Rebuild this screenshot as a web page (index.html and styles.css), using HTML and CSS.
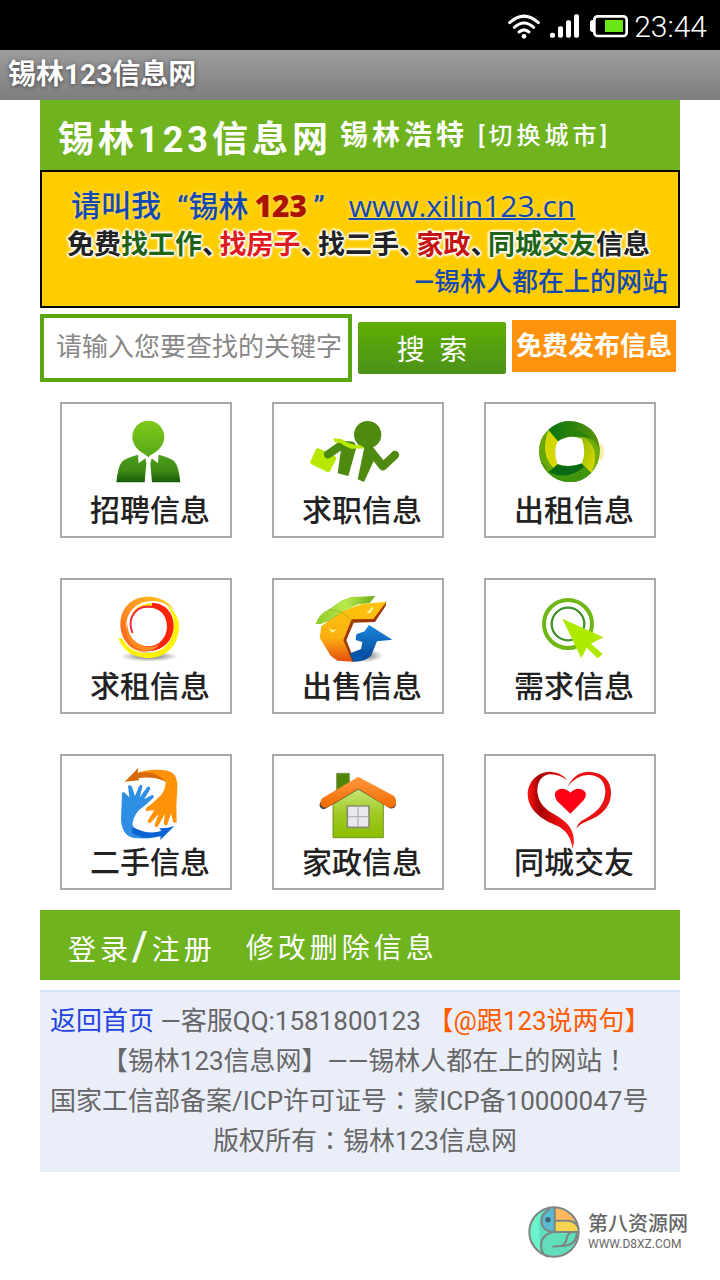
FILE: index.html
```html
<!DOCTYPE html>
<html lang="zh-CN">
<head>
    <meta charset="UTF-8">
    <meta name="viewport" content="width=device-width, initial-scale=1.0">
    <title>锡林123信息网</title>
    <link rel="stylesheet" href="styles.css">
</head>
<body>

    <!-- 状态栏 -->
    <div class="status-bar">
        <svg class="icon-wifi" width="32" height="25" viewBox="0 0 96 75" fill="none" stroke="#fff" stroke-width="9" stroke-linecap="round">
            <path d="M5 26Q48-13 91 26"/>
            <path d="M19 40Q48 14 77 40"/>
            <path d="M33 54Q48 41 63 54"/>
            <circle cx="48" cy="67" r="7" fill="#fff" stroke="none"/>
        </svg>
        <svg class="icon-signal" width="30" height="24" viewBox="0 0 90 72" fill="#fff">
            <rect x="0" y="56" width="15" height="15" rx="6"/>
            <rect x="24" y="37" width="15" height="34" rx="6"/>
            <rect x="48" y="19" width="15" height="52" rx="6"/>
            <rect x="72" y="1" width="15" height="70" rx="6"/>
        </svg>
        <svg class="icon-battery" width="38" height="24" viewBox="0 0 114 72">
            <rect x="0" y="18" width="16" height="36" rx="8" fill="#fff"/>
            <rect x="13" y="7" width="97" height="59" rx="10" fill="#000" stroke="#fff" stroke-width="8"/>
            <rect x="45" y="18" width="54" height="36" fill="#68e616"/>
        </svg>
        <span class="clock">23:44</span>
    </div>

    <div class="title-bar">锡林123信息网</div>

    <div class="page">
        <!-- 头部 -->
        <header class="header">
            <h1>锡林123信息网</h1>
            <span class="city">锡林浩特</span>
            <a class="switch-city" href="#">[切换城市]</a>
        </header>

        <!-- 横幅 -->
        <div class="banner">
            <p class="banner-call">
                <span>请叫我</span>
                <span class="banner-name"><i>“</i>锡林<b>123</b><i>”</i></span>
                <a href="#">www.xilin123.cn</a>
            </p>
            <p class="banner-list">免费<span class="green">找工作</span><i>、</i><span class="red">找房子</span><i>、</i>找二手<i>、</i><span class="darkred">家政</span><i>、</i><span class="green">同城交友</span>信息</p>
            <p class="banner-slogan">—锡林人都在上的网站</p>
        </div>

        <!-- 搜索 -->
        <form class="search">
            <input type="text" class="search-input" name="keyword" placeholder="请输入您要查找的关键字" aria-label="关键字">
            <button type="submit" class="search-button">搜&ensp;索</button>
            <a class="publish" href="#">免费发布信息</a>
        </form>

        <!-- 分类 -->
        <nav class="grid">
            <a class="tile" href="#">
                <svg viewBox="36 27 504 267">
                    <defs>
                        <linearGradient id="head" x1="0" y1="0" x2="0" y2="1"><stop offset="0" stop-color="#80c91a"/><stop offset="1" stop-color="#55a818"/></linearGradient>
                        <linearGradient id="suit" x1="0" y1="0" x2="0" y2="1"><stop offset="0" stop-color="#4da01c"/><stop offset=".6" stop-color="#3d8b14"/><stop offset="1" stop-color="#145a08"/></linearGradient>
                    </defs>
                    <path fill="url(#head)" d="M295 77C322 77 343 99 343 126C343 150 325 168 309 176Q301 180 295 187Q289 180 281 176C265 168 247 150 247 126C247 99 268 77 295 77Z"/>
                    <path fill="url(#suit)" d="M264 179L266 205L286 190L289 206L284 262H199Q203 215 216 200Q225 190 264 179ZM326 179L324 205L305 190L301 206L306 262H391Q387 215 374 200Q365 190 326 179Z"/>
                </svg>
                <span>招聘信息</span>
            </a>
            <a class="tile" href="#">
                <svg viewBox="672 27 504 267">
                    <path fill="#b9e800" stroke="#b9e800" stroke-width="16" stroke-linejoin="round" d="M804 168L851 190L834 223L789 201Z"/>
                    <g fill="#4f8a10">
                        <circle cx="953" cy="119" r="41"/>
                        <path d="M876 142L921 151L895 243L863 235Z"/>
                        <path d="M944 152L969 160L973 194L942 261L923 253Z"/>
                    </g>
                    <path fill="none" stroke="#4f8a10" stroke-width="25" stroke-linejoin="round" stroke-linecap="round" d="M905 152L875 150L834 178M960 165L999 214L1035 180"/>
                    <path fill="#b9e800" d="M850 130L874 132Q900 151 937 152L940 161Q913 159 905 162Q884 155 872 145L853 141Z"/>
                </svg>
                <span>求职信息</span>
            </a>
            <a class="tile" href="#">
                <svg viewBox="138 27 504 267">
                    <defs>
                        <linearGradient id="ringDark"><stop offset="0" stop-color="#08730d"/><stop offset="1" stop-color="#58940a"/></linearGradient>
                        <linearGradient id="ringLime" x1="0" y1="0" x2="1" y2="1"><stop offset="0" stop-color="#8fb808"/><stop offset="1" stop-color="#e0dd00"/></linearGradient>
                    </defs>
                    <ellipse cx="482" cy="171" rx="10" ry="25" fill="#faedab"/>
                    <circle cx="388" cy="170" r="91" fill="#4f9b08"/>
                    <path fill="url(#ringDark)" d="M325 105Q371 62 430 88Q480 112 479 172Q467 130 419 124Q380 118 355 140Z"/>
                    <path fill="#277f0c" d="M355 140Q372 94 423 112Q448 122 463 145Q446 129 421 125Q381 119 355 140Z"/>
                    <path fill="#d5d800" d="M325 105L355 140Q336 173 356 203L341 220Q298 180 325 105Z"/>
                    <path fill="#67a90a" d="M325 105Q295 177 341 220L330 232Q280 178 308 124Z"/>
                    <path fill="#6fae08" d="M479 172Q476 211 453 234Q471 188 451 146Q437 127 420 125Q470 126 479 172Z"/>
                    <path fill="url(#ringLime)" d="M420 125Q452 133 463 166Q471 202 453 234L422 204Q442 166 420 125Z"/>
                    <path fill="#086b13" d="M326 231L353 208Q381 221 423 204L453 234Q425 264 384 261Q351 258 326 231Z"/>
                    <path fill="#3f950b" d="M326 231Q381 258 433 215L453 234Q425 264 384 261Q351 258 326 231Z"/>
                    <path fill="#fff" d="M352 140Q389 116 425 131Q440 167 426 205Q389 220 352 207Q339 171 352 140Z"/>
                </svg>
                <span>出租信息</span>
            </a>

            <a class="tile" href="#">
                <svg viewBox="36 30 504 267">
                    <defs>
                        <radialGradient id="shade"><stop offset="0" stop-color="#333" stop-opacity=".75"/><stop offset="1" stop-color="#333" stop-opacity="0"/></radialGradient>
                        <linearGradient id="sun" x1="0" y1="1" x2="1" y2="0"><stop offset="0" stop-color="#ff5a16"/><stop offset=".5" stop-color="#ff9222"/><stop offset="1" stop-color="#ffcf16"/></linearGradient>
                    </defs>
                    <ellipse cx="298" cy="259" rx="86" ry="16" fill="url(#shade)"/>
                    <path fill="#fff100" d="M206 208Q208 202 216 205Q239 250 291 249C346 249 376 207 371 153Q367 125 348 104Q388 129 387 174C384 230 343 267 289 264Q228 260 206 208Z"/>
                    <path fill="url(#sun)" d="M299 244C244 253 210 207 211 160C213 109 249 79 297 80Q347 82 374 121Q339 90 302 93C258 96 231 126 229 164C229 205 261 237 299 244Z"/>
                    <path fill="#ffe100" d="M246 130Q265 101 306 99L306 107Q268 105 246 137Z"/>
                    <path fill="#ff230a" d="M306 98C348 100 372 130 371 170C368 218 334 243 294 243C256 243 230 213 230 177Q248 226 290 229C326 230 350 204 351 170Q349 122 306 113Z"/>
                    <path fill="#ff8a20" d="M231 154Q233 218 289 230Q315 233 331 219Q315 245 286 243Q241 236 230 193Z"/>
                    <path fill="none" stroke="#f52b39" stroke-width="6" stroke-linecap="round" d="M306 111Q263 104 246 140Q237 163 247 187"/>
                </svg>
                <span>求租信息</span>
            </a>
            <a class="tile" href="#">
                <svg viewBox="672 30 504 267">
                    <defs>
                        <linearGradient id="gold" x1="0" y1="0" x2="0" y2="1"><stop offset="0" stop-color="#ffc40e"/><stop offset=".6" stop-color="#fbb010"/><stop offset="1" stop-color="#e34d0c"/></linearGradient>
                        <linearGradient id="leaf"><stop offset="0" stop-color="#8cc92a"/><stop offset=".5" stop-color="#b9ea4c"/><stop offset="1" stop-color="#69aa16"/></linearGradient>
                        <linearGradient id="blue" x1="0" y1="0" x2="0" y2="1"><stop offset="0" stop-color="#1987df"/><stop offset="1" stop-color="#034593"/></linearGradient>
                    </defs>
                    <ellipse cx="942" cy="257" rx="58" ry="20" fill="url(#shade)"/>
                    <path fill="url(#gold)" d="M832 155L878 122L937 102L1009 95L973 151L908 154L883 211L911 275L862 272L842 257L809 203L814 169Z"/>
                    <path fill="#9e3807" d="M1009 95L1007 108L975 156L911 158L889 211L914 273L907 275L880 211L905 148L970 147Z"/>
                    <path fill="url(#leaf)" d="M797 162Q806 132 837 118L877 90L903 81L976 78L959 99L925 103L875 126L834 153L813 162Z"/>
                    <path fill="none" stroke="#8fae1b" stroke-width="2" d="M837 118L875 126L908 155M875 126L832 155"/>
                    <path fill="#fff1a0" d="M834 174L847 180L862 177L847 188ZM950 128L966 111L970 115L961 130Z"/>
                    <path fill="url(#blue)" d="M957 165L1027 209L981 214L964 256Q948 275 911 275L900 251L933 238L937 216L917 210L919 193L944 184Z"/>
                    <path fill="#0456ab" d="M900 251L933 238L945 247L935 269L911 275Z"/>
                </svg>
                <span>出售信息</span>
            </a>
            <a class="tile" href="#">
                <svg viewBox="138 555 504 267">
                    <circle cx="384" cy="687" r="72" fill="none" stroke="#6eb713" stroke-width="12"/>
                    <circle cx="384" cy="687" r="49" fill="none" stroke="#3f912c" stroke-width="7"/>
                    <path fill="#aee900" d="M367 671L490 727L453 746L488 777L473 790L440 758L424 790Z"/>
                </svg>
                <span>需求信息</span>
            </a>

            <a class="tile" href="#">
                <svg viewBox="36 33 504 267">
                    <path fill="#ff9207" d="M252 87Q301 69 352 77Q383 83 382 126L379 181L380 231Q375 238 369 230L363 205L352 239Q344 245 341 235L345 206L324 244Q314 251 314 239L326 207L301 234Q291 235 294 226L313 196L287 198Q285 188 304 178L323 160Q346 143 347 112Q333 91 292 92Z"/>
                    <path fill="#d66a09" d="M224 110L265 69L263 85Q311 72 349 111Q309 92 264 100L269 106Z"/>
                    <path fill="#2d8ee2" d="M216 149Q214 141 223 142L238 157L234 123Q239 118 245 124L255 153L268 122Q276 116 277 125L269 157L292 126Q301 121 301 132L282 163L306 150Q315 150 309 160L282 184Q252 202 247 238Q254 265 301 265L344 263Q316 285 253 279Q214 273 213 219Z"/>
                    <path fill="#0864d0" d="M247 245Q291 271 334 258L328 250Q353 251 373 243L331 285L332 274Q278 286 247 264Z"/>
                </svg>
                <span>二手信息</span>
            </a>
            <a class="tile" href="#">
                <svg viewBox="672 33 504 267">
                    <defs>
                        <linearGradient id="wall" x1="0" y1="0" x2="0" y2="1"><stop offset="0" stop-color="#c7e77c"/><stop offset=".5" stop-color="#a0c923"/><stop offset="1" stop-color="#8ac000"/></linearGradient>
                        <linearGradient id="roof" x1="0" y1="0" x2="0" y2="1"><stop offset="0" stop-color="#ff9a42"/><stop offset="1" stop-color="#f36a00"/></linearGradient>
                    </defs>
                    <path fill="#508508" stroke="#79984e" stroke-width="3" d="M860 85H898V140L860 165Z"/>
                    <path fill="url(#wall)" stroke="#76952d" stroke-width="3" d="M849 178L925 130L1000 177V278H849Z"/>
                    <path fill="none" stroke="#4e4744" stroke-width="25" stroke-linecap="round" stroke-linejoin="round" d="M821 180L925 119L1025 178"/>
                    <path fill="url(#roof)" d="M925 95L1032 153Q1042 164 1036 181Q1030 191 1015 187L925 131L832 187Q816 190 812 176Q809 161 824 155Z"/>
                    <path fill="#e8e8ef" stroke="#8b8b73" stroke-width="5" d="M892 183H957V247H892Z"/>
                    <path stroke="#b5b5ba" stroke-width="4" d="M924 184V246M893 215H956"/>
                </svg>
                <span>家政信息</span>
            </a>
            <a class="tile" href="#">
                <svg viewBox="48 33 504 267">
                    <defs>
                        <linearGradient id="ribbon"><stop offset="0" stop-color="#ff1313"/><stop offset=".25" stop-color="#a40000"/><stop offset=".6" stop-color="#e00a0a"/><stop offset="1" stop-color="#ff1c1c"/></linearGradient>
                    </defs>
                    <path fill="url(#ribbon)" d="M293 106Q273 81 240 80C200 81 174 112 173 148C174 195 214 223 254 239Q300 256 308 311Q320 272 295 240Q280 223 246 204C215 185 202 162 202 134Q204 95 237 88Q265 86 293 106Z"/>
                    <path fill="#e81212" d="M293 125Q314 80 358 80C402 82 424 109 423 145C422 191 389 214 351 229Q329 237 319 251Q322 232 346 221C387 199 405 174 406 139C405 107 386 91 357 90Q322 88 293 125Z"/>
                    <path fill="#ff0017" d="M301 206L261 168Q246 144 264 134Q284 125 301 143Q319 125 338 134Q356 145 341 166Z"/>
                </svg>
                <span>同城交友</span>
            </a>
        </nav>

        <!-- 会员 -->
        <nav class="member">
            <span><a href="#">登录</a><b>/</b><a href="#">注册</a></span>
            <a href="#">修改删除信息</a>
        </nav>

        <!-- 页脚 -->
        <footer class="footer">
            <p><a class="home" href="#">返回首页</a> —客服QQ:1581800123 <a class="talk" href="#">【@跟123说两句】</a></p>
            <p class="center">【锡林123信息网】——锡林人都在上的网站<span class="mark" lang="zh-TW">！</span></p>
            <p>国家工信部备案/ICP许可证号<span class="mark" lang="zh-TW">：</span>蒙ICP备10000047号</p>
            <p class="center">版权所有<span class="mark" lang="zh-TW">：</span>锡林123信息网</p>
        </footer>
    </div>

    <div class="watermark">
        <svg width="52" height="52" viewBox="0 0 156 156">
            <defs><clipPath id="badge"><circle cx="78" cy="78" r="72"/></clipPath></defs>
            <g clip-path="url(#badge)">
                <rect width="156" height="156" fill="#61dfbd"/>
                <path fill="#6af3cd" d="M0 0H49Q22 48 43 156H0Z"/>
                <path fill="#5bbbd5" d="M80 0V78Q35 75 39 41Q43 13 80 0Z"/>
                <path fill="#ffb75d" d="M80 0H125L152 45H80Z"/>
                <path fill="#f5d250" d="M80 44H125Q151 52 151 78H80Z"/>
            </g>
            <g fill="none" stroke="#7d8583" stroke-width="6" stroke-linecap="round">
                <circle cx="78" cy="78" r="74"/>
                <path d="M80 6V78H150M80 44H124Q145 48 151 66M63 10Q31 32 43 58Q51 77 80 78Q39 84 39 120Q40 145 58 151M146 80Q147 118 100 120Q77 122 76 122M100 120Q115 112 117 94Q119 83 130 79"/>
            </g>
            <circle cx="60" cy="41" r="8" fill="#41636e"/>
        </svg>
        <div class="watermark-text">
            <strong>第八资源网</strong>
            <span>WWW.D8XZ.COM</span>
        </div>
    </div>

</body>
</html>
```
FILE: styles.css
```css
body {
    margin: 0;
    background-color: #fff;
    font-family: Roboto, "Noto Sans CJK SC", sans-serif;
    font-size: 26px;
    color: #666;
}
h1, p {
    margin: 0;
}
a {
    color: inherit;
    text-decoration: none;
}
i {
    font-style: normal;
}
svg {
    display: block;
}

/* 状态栏和标题栏 */
.status-bar {
    display: flex;
    align-items: center;
    justify-content: flex-end;
    gap: 10px;
    height: 50px;
    padding: 2px 13px 0;
    box-sizing: border-box;
    background-color: #000;
}
.clock {
    margin-left: -4px;
    font-size: 30px;
    font-weight: 300;
    color: #fff;
}
.title-bar {
    padding: 0 8px;
    height: 50px;
    line-height: 50px;
    font-size: 28px;
    font-weight: bold;
    color: #fff;
    background: linear-gradient(#9c9c9c, #7e7e7e);
    text-shadow: 0 1px 4px #444;
}

.page {
    padding: 0 40px;
}

/* 头部 */
.header {
    display: flex;
    align-items: center;
    height: 70px;
    padding: 0 0 4px 18px;
    box-sizing: border-box;
    background-color: #6fb31f;
    color: #fff;
    letter-spacing: 4px;
    white-space: nowrap;
}
.header h1 {
    padding-top: 6px;
    font-size: 36px;
    font-weight: bold;
}
.city {
    margin: 0 10px 0 8px;
    font-size: 28px;
    font-weight: bold;
}
.switch-city {
    font-size: 24px;
    font-weight: 500;
}

/* 横幅 */
.banner {
    padding: 15px 10px 6px 25px;
    border: 2px solid #000;
    background-color: #fc0;
    color: #1248b5;
    font-weight: 500;
    line-height: 38px;
    white-space: nowrap;
}
.banner-call {
    display: flex;
    gap: 16px;
    padding-left: 4px;
    font-size: 30px;
    text-shadow: 0 0 4px #ffe680;
}
.banner-call b {
    padding: 0 6px;
    font-family: "Open Sans", sans-serif;
    font-weight: 800;
    color: #ac1200;
}
.banner-call a {
    margin-left: 8px;
    font-family: "Open Sans", sans-serif;
    font-weight: 500;
    text-decoration: underline;
    text-decoration-thickness: 2px;
}
.banner-list {
    font-size: 27px;
    font-weight: bold;
    color: #222;
    text-shadow: 2px 0 2px #fff, -2px 0 2px #fff, 0 2px 2px #fff, 0 -2px 2px #fff, 0 0 3px #fff;
}
.banner-list i {
    margin-right: 4px;
    font-feature-settings: "halt";
}
.green {
    color: #1f6414;
}
.red {
    color: #e11a22;
}
.darkred {
    color: #c51212;
}
.banner-slogan {
    text-align: right;
    line-height: 36px;
}

/* 搜索 */
.search {
    display: flex;
    align-items: center;
    gap: 6px;
    margin-top: 6px;
    padding-right: 4px;
}
.search-input {
    flex: 1;
    min-width: 0;
    height: 68px;
    box-sizing: border-box;
    padding: 0 0 2px 12px;
    border: 4px solid #59a60f;
    border-radius: 0;
    font: inherit;
    color: #333;
    outline: none;
}
.search-input::placeholder {
    color: #888;
}
.search-button {
    width: 148px;
    height: 52px;
    padding: 0;
    border: none;
    border-radius: 2px;
    background: linear-gradient(#5fae03, #4c9219);
    color: #fff;
    font: inherit;
    font-size: 28px;
    cursor: pointer;
}
.publish {
    width: 164px;
    margin-bottom: 4px;
    line-height: 52px;
    background-color: #ff930e;
    color: #fff;
    font-weight: bold;
    text-align: center;
    white-space: nowrap;
}

/* 分类 */
.grid {
    display: grid;
    grid-template-columns: repeat(3, 1fr);
    gap: 40px;
    padding: 20px 24px 20px 20px;
}
.tile {
    border: 2px solid #aaa;
    padding-bottom: 7px;
    color: #222;
    font-size: 30px;
    font-weight: 500;
    line-height: 36px;
    text-align: center;
}
.tile svg {
    width: 100%;
    overflow: visible;
}
.tile span {
    display: block;
    padding-left: 8px;
}

/* 会员 */
.member {
    display: flex;
    align-items: center;
    gap: 30px;
    height: 70px;
    padding: 2px 28px 0;
    box-sizing: border-box;
    background-color: #6fb31f;
    color: #fff;
    font-size: 28px;
    letter-spacing: 4px;
}
.member b {
    font-size: 40px;
    font-weight: 500;
}

/* 页脚 */
.footer {
    margin-top: 10px;
    padding: 9px 0 11px 10px;
    border-top: 2px solid #d5e3f7;
    background-color: #eaeef8;
    line-height: 40px;
}
.center {
    text-align: center;
}
.home {
    color: #2343e0;
}
.talk {
    color: #ff5a00;
}
/* 标点居中 */
.mark {
    font-family: "Noto Sans CJK TC", sans-serif;
    line-height: 1;
}

.watermark {
    display: flex;
    justify-content: flex-end;
    gap: 8px;
    margin-top: 34px;
    padding: 0 32px 20px;
}
.watermark-text {
    display: flex;
    flex-direction: column;
    padding-top: 6px;
    line-height: 24px;
}
.watermark strong {
    font-size: 20px;
    font-weight: 500;
}
.watermark span {
    font-size: 12px;
    line-height: 16px;
}
```
